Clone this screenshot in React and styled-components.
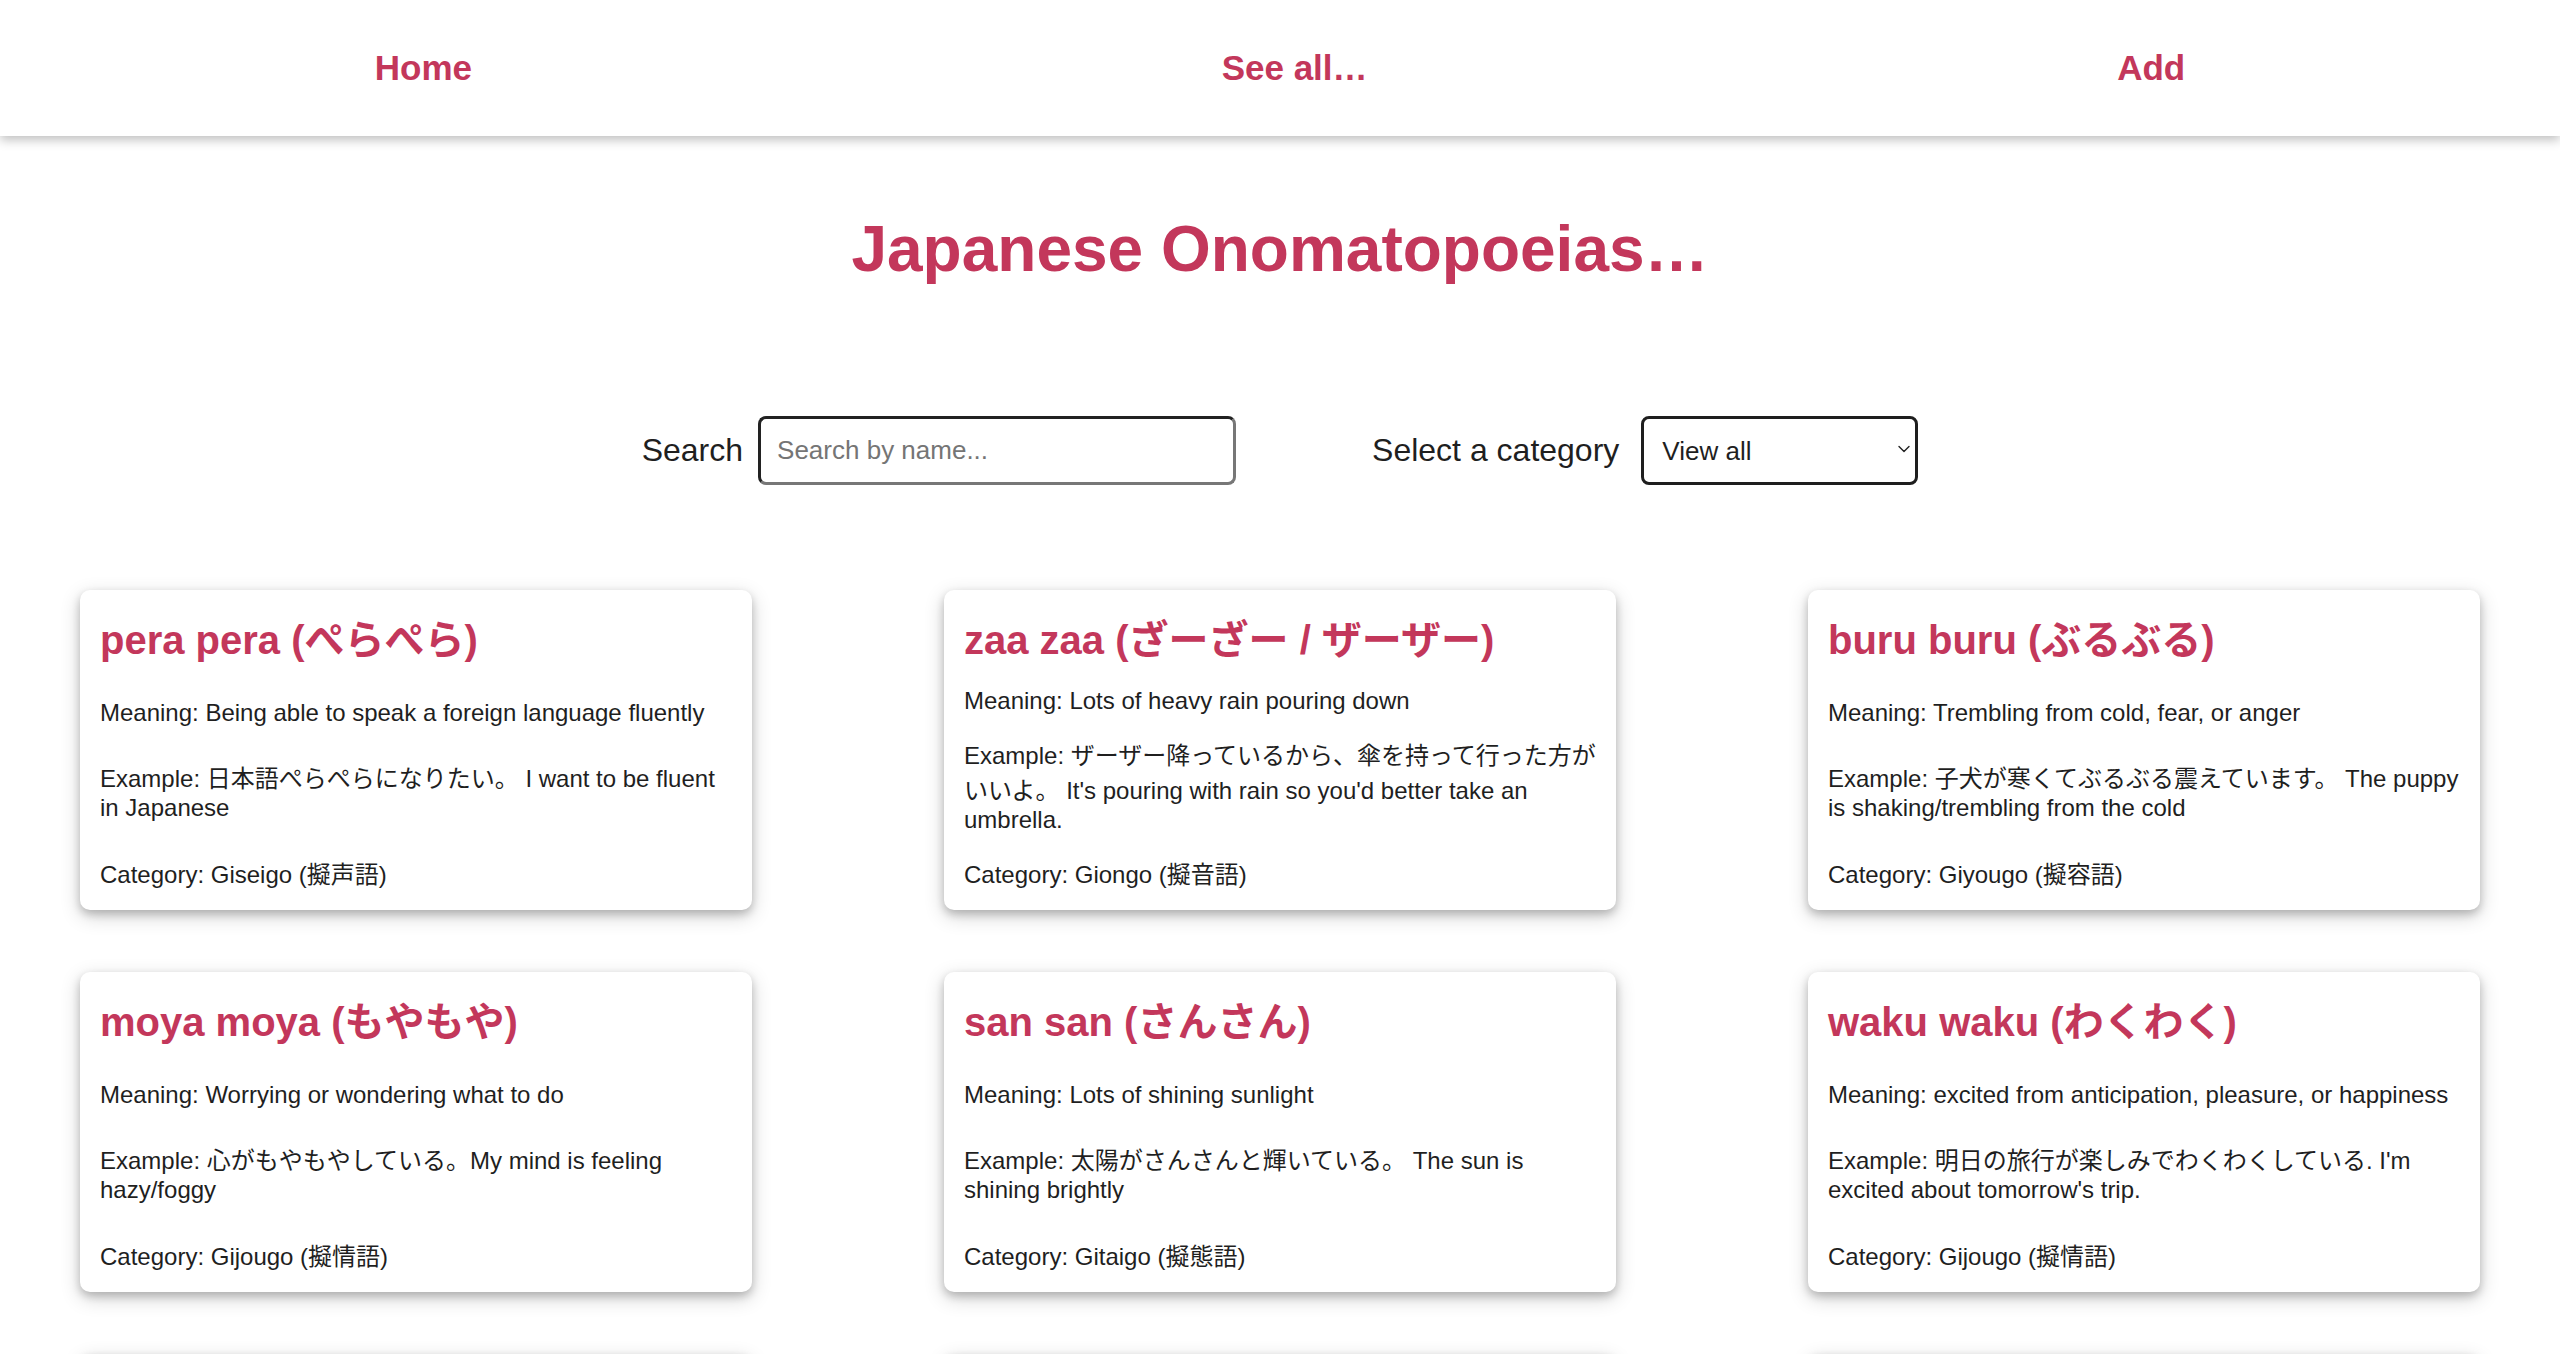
import React from "react";
import styled, { createGlobalStyle } from "styled-components";

const ACCENT = "#c3375b";
const INK = "#1f1f1f";

const GlobalStyle = createGlobalStyle`
  * { box-sizing: border-box; }
  html, body {
    margin: 0;
    padding: 0;
    background: #ffffff;
    font-family: "Liberation Sans", Arial, "Noto Sans CJK JP", sans-serif;
    color: ${INK};
  }
`;

const Page = styled.div`
  display: flex;
  flex-direction: column;
  min-height: 100vh;
  background: #ffffff;
`;

const NavBar = styled.nav`
  height: 136px;
  display: flex;
  justify-content: space-around;
  align-items: center;
  background: #ffffff;
  box-shadow: 0 4px 10px rgba(0, 0, 0, 0.25);
  position: relative;
  z-index: 2;
`;

const NavLink = styled.a`
  font-size: 35px;
  font-weight: 700;
  color: ${ACCENT};
  text-decoration: none;
  cursor: pointer;
`;

const Main = styled.main`
  display: flex;
  flex-direction: column;
  align-items: stretch;
`;

const Title = styled.h1`
  margin: 76px 0 0;
  font-size: 64px;
  line-height: 74px;
  font-weight: 700;
  color: ${ACCENT};
  text-align: center;
`;

const SearchBar = styled.div`
  margin-top: 130px;
  display: flex;
  justify-content: center;
  align-items: center;
  gap: 136px;
`;

const Field = styled.label`
  display: flex;
  align-items: center;
  gap: ${(p) => p.$gap}px;
  font-size: 32px;
  color: ${INK};
`;

const SearchInput = styled.input`
  width: 478px;
  height: 69px;
  padding: 0 16px;
  font-family: "Liberation Sans", Arial, sans-serif;
  font-size: 26px;
  color: ${INK};
  background: #ffffff;
  border: 3px solid;
  border-color: #222 #777 #777 #222;
  border-radius: 8px;
  outline: none;
  &::placeholder {
    color: #757575;
  }
`;

const SelectWrap = styled.div`
  position: relative;
  width: 277px;
  height: 69px;
`;

const Select = styled.select`
  appearance: none;
  -webkit-appearance: none;
  width: 100%;
  height: 100%;
  padding: 0 40px 0 18px;
  font-family: "Liberation Sans", Arial, sans-serif;
  font-size: 26px;
  color: ${INK};
  background: #ffffff;
  border: 3px solid #1e1e1e;
  border-radius: 8px;
  outline: none;
`;

const Chevron = styled.svg`
  position: absolute;
  right: 8px;
  top: 29px;
  pointer-events: none;
`;

const Grid = styled.section`
  margin-top: 105px;
  padding: 0 80px 60px;
  display: grid;
  grid-template-columns: repeat(3, 1fr);
  column-gap: 192px;
  row-gap: 62px;
`;

const Card = styled.article`
  height: 320px;
  padding: 18px 14px 20px 20px;
  display: flex;
  flex-direction: column;
  justify-content: space-between;
  background: #ffffff;
  border-radius: 10px;
  box-shadow: 0 4px 8px 0 rgba(0, 0, 0, 0.2), 0 6px 20px 0 rgba(0, 0, 0, 0.19);
`;

const CardTitle = styled.h2`
  margin: 0;
  font-size: 40px;
  font-weight: 700;
  color: ${ACCENT};
`;

const CardText = styled.p`
  margin: 0;
  font-size: 24px;
  color: ${INK};
`;

const words = [
  {
    title: "pera pera (ぺらぺら)",
    meaning: "Being able to speak a foreign language fluently",
    example: "日本語ぺらぺらになりたい。 I want to be fluent in Japanese",
    category: "Giseigo (擬声語)",
  },
  {
    title: "zaa zaa (ざーざー / ザーザー)",
    meaning: "Lots of heavy rain pouring down",
    example:
      "ザーザー降っているから、傘を持って行った方がいいよ。 It's pouring with rain so you'd better take an umbrella.",
    category: "Giongo (擬音語)",
  },
  {
    title: "buru buru (ぶるぶる)",
    meaning: "Trembling from cold, fear, or anger",
    example:
      "子犬が寒くてぶるぶる震えています。 The puppy is shaking/trembling from the cold",
    category: "Giyougo (擬容語)",
  },
  {
    title: "moya moya (もやもや)",
    meaning: "Worrying or wondering what to do",
    example: "心がもやもやしている。My mind is feeling hazy/foggy",
    category: "Gijougo (擬情語)",
  },
  {
    title: "san san (さんさん)",
    meaning: "Lots of shining sunlight",
    example: "太陽がさんさんと輝いている。 The sun is shining brightly",
    category: "Gitaigo (擬態語)",
  },
  {
    title: "waku waku (わくわく)",
    meaning: "excited from anticipation, pleasure, or happiness",
    example:
      "明日の旅行が楽しみでわくわくしている. I'm excited about tomorrow's trip.",
    category: "Gijougo (擬情語)",
  },
  {
    title: "doki doki (どきどき)",
    meaning: "Heart pounding from nerves or excitement",
    example: "試験の前はどきどきする。 My heart pounds before an exam",
    category: "Gijougo (擬情語)",
  },
  {
    title: "kira kira (きらきら)",
    meaning: "Sparkling or glittering",
    example: "星がきらきら光っている。 The stars are twinkling",
    category: "Gitaigo (擬態語)",
  },
  {
    title: "wan wan (わんわん)",
    meaning: "The sound of a dog barking",
    example: "犬がわんわん鳴いている。 The dog is barking",
    category: "Giseigo (擬声語)",
  },
];

export default function App() {
  return (
    <Page>
      <GlobalStyle />
      <NavBar>
        <NavLink>Home</NavLink>
        <NavLink>See all…</NavLink>
        <NavLink>Add</NavLink>
      </NavBar>
      <Main>
        <Title>Japanese Onomatopoeias…</Title>
        <SearchBar>
          <Field $gap={15}>
            Search
            <SearchInput type="text" placeholder="Search by name..." />
          </Field>
          <Field $gap={22}>
            Select a category
            <SelectWrap>
              <Select defaultValue="all">
                <option value="all">View all</option>
                <option value="giongo">Giongo (擬音語)</option>
                <option value="giseigo">Giseigo (擬声語)</option>
                <option value="gitaigo">Gitaigo (擬態語)</option>
                <option value="giyougo">Giyougo (擬容語)</option>
                <option value="gijougo">Gijougo (擬情語)</option>
              </Select>
              <Chevron width="12" height="8" viewBox="0 0 12 8">
                <polyline
                  points="1,1.5 6,6.5 11,1.5"
                  fill="none"
                  stroke="#222"
                  strokeWidth="1.4"
                  strokeLinecap="round"
                  strokeLinejoin="round"
                />
              </Chevron>
            </SelectWrap>
          </Field>
        </SearchBar>
        <Grid>
          {words.map((w) => (
            <Card key={w.title}>
              <CardTitle>{w.title}</CardTitle>
              <CardText>{`Meaning: ${w.meaning}`}</CardText>
              <CardText>{`Example: ${w.example}`}</CardText>
              <CardText>{`Category: ${w.category}`}</CardText>
            </Card>
          ))}
        </Grid>
      </Main>
    </Page>
  );
}
